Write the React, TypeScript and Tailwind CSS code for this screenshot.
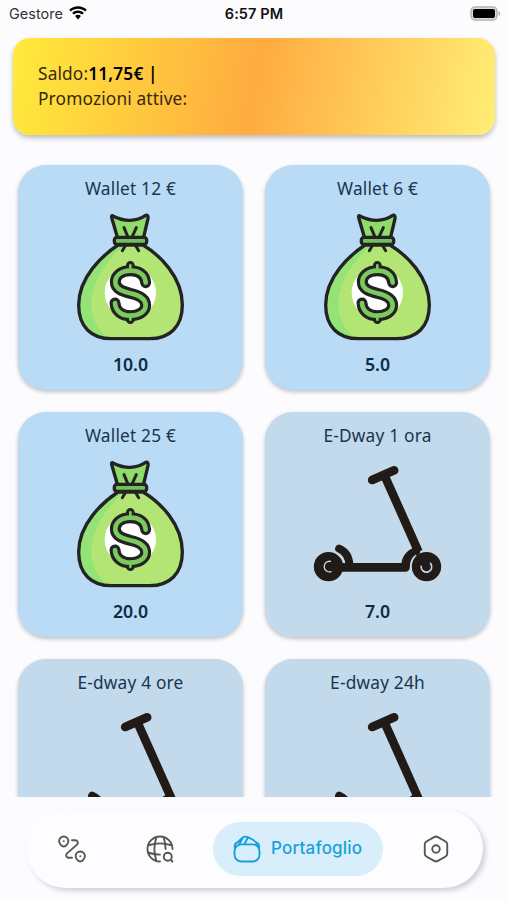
import React from 'react';

type PackKind = 'money' | 'scooter';

interface Pack {
  name: string;
  price: string;
  kind: PackKind;
}

const PACKS: Pack[] = [
  { name: 'Wallet 12 €', price: '10.0', kind: 'money' },
  { name: 'Wallet 6 €', price: '5.0', kind: 'money' },
  { name: 'Wallet 25 €', price: '20.0', kind: 'money' },
  { name: 'E-Dway 1 ora', price: '7.0', kind: 'scooter' },
  { name: 'E-dway 4 ore', price: '', kind: 'scooter' },
  { name: 'E-dway 24h', price: '', kind: 'scooter' },
];

const S_CURVE =
  'M228 233C226 207 206 197 182 197C154 197 137 212 137 231C137 252 158 259 182 265C210 271 228 281 228 301C228 321 206 332 182 332C156 332 137 318 136 294';
const S_TIPS = 'M182 199V181M182 330V344';

const MoneyBag: React.FC = () => (
  <svg viewBox="-8 24 384 384" className="w-32 h-32" fill="none" strokeLinecap="round" strokeLinejoin="round">
    <path d="M128 32Q155 46 181 46Q207 45 228 31Q237 29 235 41L221 100H144L127 41Q124 31 128 32Z" fill="#8fdc6b" stroke="#232323" strokeWidth="10" />
    <path d="M145 120C100 150 27 215 27 300C27 365 65 401 125 401H240C300 401 338 365 338 300C338 215 270 150 220 120Z" fill="#b3e575" />
    <path d="M145 120C100 150 27 215 27 300C27 365 65 401 125 401C85 385 63 335 65 292C67 225 115 165 160 122Z" fill="#93e377" />
    <circle cx="182" cy="263" r="77" fill="#fff" />
    <path d="M145 120C100 150 27 215 27 300C27 365 65 401 125 401H240C300 401 338 365 338 300C338 215 270 150 220 120Z" stroke="#232323" strokeWidth="10" />
    <path d="M163 68L174 94M200 68L188 94M166 124L158 137M199 124L207 137" stroke="#232323" strokeWidth="9" />
    <rect x="134" y="97" width="97" height="21" rx="8" fill="#72c05b" stroke="#232323" strokeWidth="10" />
    <path d={S_CURVE} stroke="#232323" strokeWidth="33" />
    <path d={S_TIPS} stroke="#232323" strokeWidth="26" />
    <path d="M162 192L172 180H192L202 192ZM162 336L172 347H192L202 336Z" fill="#232323" />
    <path d={S_CURVE} stroke="#7cc95d" strokeWidth="14" />
    <path d={S_TIPS} stroke="#7cc95d" strokeWidth="8" />
  </svg>
);

const Scooter: React.FC = () => (
  <svg viewBox="26.5 15 384 384" className="w-32 h-32 overflow-visible" fill="none" stroke="#211a17" strokeLinecap="round" strokeLinejoin="round">
    <path d="M201 75L267 46" strokeWidth="26" />
    <path d="M241 68L340 290" strokeWidth="26" strokeLinecap="butt" />
    <path d="M102 281C121 289 132 308 133 332" strokeWidth="24" />
    <path d="M70 337H301C300 312 314 296 332 290" strokeWidth="26" />
    <circle cx="70" cy="335" r="44" fill="#211a17" stroke="none" />
    <circle cx="364" cy="335" r="44" fill="#211a17" stroke="none" />
    <path d="M76 319A16 16 0 1 0 78 350" stroke="#c3daec" strokeWidth="4" />
    <path d="M100 300Q115 311 118 323M318 324Q320 310 332 301" stroke="#c3daec" strokeWidth="4" />
    <path d="M376 325A16 16 0 1 1 348 334" stroke="#c3daec" strokeWidth="5" />
  </svg>
);

const PackCard: React.FC<{ pack: Pack }> = ({ pack }) => (
  <div
    className={`h-[225px] rounded-[28px] flex flex-col items-center shadow-[0_2px_4px_rgba(0,0,0,0.24)] text-[#17364f] ${
      pack.kind === 'money' ? 'bg-[#badbf5]' : 'bg-[#c3daec]'
    }`}
  >
    <p className="mt-3 h-6 leading-6 text-[17.3px] tracking-[0.2px]">{pack.name}</p>
    <div className="mt-3">{pack.kind === 'money' ? <MoneyBag /> : <Scooter />}</div>
    <p className="mt-[11px] leading-6 text-[17.7px] font-semibold text-[#0c2c47]">{pack.price}</p>
  </div>
);

const NavIcon: React.FC<{ children: React.ReactNode }> = ({ children }) => (
  <svg
    viewBox="0 0 24 24"
    className="w-[30px] h-[30px] flex-shrink-0"
    fill="none"
    stroke="currentColor"
    strokeWidth="1.5"
    strokeLinecap="round"
    strokeLinejoin="round"
  >
    {children}
  </svg>
);

const App: React.FC = () => {
  return (
    <div className="w-[507px] h-[900px] overflow-hidden flex flex-col bg-[#fcfcff] font-['Noto_Sans',sans-serif]">
      {/* Status bar */}
      <div className="h-7 grid grid-cols-3 items-center pl-[9px] pr-[8px] font-['Inter',sans-serif] text-[#111]">
        <div className="flex items-center gap-1.5 text-[14.5px] text-[#333]">
          Gestore
          <svg viewBox="0 0 18 14" className="w-[18px] h-[14px] -mt-0.5" fill="#000">
            <path d="M9 0.3C5.6 0.3 2.5 1.6 0.2 3.8L1.9 5.6C3.8 3.8 6.2 2.8 9 2.8S14.2 3.8 16.1 5.6L17.8 3.8C15.5 1.6 12.4 0.3 9 0.3Z" />
            <path d="M9 4.6C6.8 4.6 4.8 5.4 3.2 6.9L4.9 8.6C6 7.6 7.4 7 9 7S12 7.6 13.1 8.6L14.8 6.9C13.2 5.4 11.2 4.6 9 4.6Z" />
            <path d="M9 8.7C7.9 8.7 6.9 9.1 6.1 9.9L9 13.4L11.9 9.9C11.1 9.1 10.1 8.7 9 8.7Z" />
          </svg>
        </div>
        <div className="text-center text-[14.5px] font-semibold tracking-[0.1px]">6:57 PM</div>
        <svg viewBox="0 0 31 15" className="w-[31px] h-[15px] justify-self-end -mt-0.5 translate-x-[2px]">
          <rect x="1" y="1" width="26" height="13" rx="4" fill="#dcdcdf" stroke="#b3b3b6" strokeWidth="1.5" />
          <rect x="3" y="3" width="22" height="9" rx="2" fill="#000" />
          <path d="M28.6 5C30.6 5.8 30.6 9.2 28.6 10Z" fill="#a9a9ad" />
        </svg>
      </div>

      {/* Balance */}
      <div className="mt-[10px] ml-[13px] mr-3 h-[97px] flex-shrink-0 rounded-[17px] pl-[25px] flex flex-col justify-center text-[17.3px] leading-[24.5px] tracking-[0.15px] text-[#38280c] bg-[linear-gradient(100deg,#ffeb3b_0%,#ffab40_50%,#ffee75_100%)] shadow-[0_3px_5px_rgba(0,0,0,0.25)]">
        <p>
          Saldo:<span className="font-semibold text-black">11,75€ |</span>
        </p>
        <p>Promozioni attive:</p>
      </div>

      {/* Packs */}
      <div className="flex-1 overflow-hidden pt-[30px] pl-[18px] pr-[17px] grid grid-cols-2 gap-x-[22px] gap-y-[22px] content-start">
        {PACKS.map((pack) => (
          <PackCard key={pack.name} pack={pack} />
        ))}
      </div>

      {/* Bottom navigation */}
      <div className="h-[103px] flex-shrink-0 pt-3 pl-[26px] pr-6">
        <nav className="h-[79px] rounded-full bg-[#fdfdff] flex items-center pl-[31px] pr-8 pt-px text-[#555] shadow-[3px_3px_5px_rgba(0,0,0,0.17)]">
          <NavIcon>
            <path d="M12 5h2.68c1.85 0 2.71 2.29 1.32 3.51L8.01 15.5C6.62 16.71 7.48 19 9.32 19H12" />
            <path d="M5.4 2C3.3 2 1.7 3.6 1.7 5.6C1.7 8 4 10 5.4 10C6.8 10 9.1 8 9.1 5.6C9.1 3.6 7.5 2 5.4 2Z" />
            <path d="M18.6 14C16.5 14 14.9 15.6 14.9 17.6C14.9 20 17.2 22 18.6 22C20 22 22.3 20 22.3 17.6C22.3 15.6 20.7 14 18.6 14Z" />
            <path d="M5.4 5.7h.01M18.6 17.7h.01" />
          </NavIcon>
          <div className="ml-[58px]">
            <NavIcon>
              <path d="M22 12c0-5.52-4.48-10-10-10S2 6.48 2 12s4.48 10 10 10" />
              <path d="M8 3h1a28.424 28.424 0 0 0 0 18H8M15 3c.97 2.92 1.46 5.96 1.46 9" />
              <path d="M3 16v-1c2.92.97 5.96 1.46 9 1.46M3 9a28.424 28.424 0 0 1 18 0" />
              <circle cx="18.2" cy="18.2" r="3.2" />
              <path d="m22 22-1-1" />
            </NavIcon>
          </div>
          <div className="ml-[38px] w-[170px] h-[54px] rounded-full bg-[#d8eefb] text-[#18a0dc] flex items-center pl-[19px] gap-[9px]">
            <NavIcon>
              <rect x="2" y="8.3" width="20" height="13.7" rx="5.5" />
              <path d="M2.3 11.5C1.8 9 2.8 7.2 4.6 6.6L8.4 2.9C9.6 1.8 10.8 1.8 12.6 2.5L17.4 5C19 5.9 19.7 7 19.9 8.6M21.7 11.5C22 9.2 21.2 7.6 19.4 6.7M8.9 2.5L6 8M12.8 2.6L10 8" />
            </NavIcon>
            <span className="font-['Inter',sans-serif] text-[17px] font-medium tracking-[0.2px]">Portafoglio</span>
          </div>
          <div className="ml-auto">
            <NavIcon>
              <path d="M3 9.11v5.77C3 17 3 17 5 18.35l5.5 3.18c.83.48 2.18.48 3 0l5.5-3.18c2-1.35 2-1.35 2-3.46V9.11C21 7 21 7 19 5.65l-5.5-3.18c-.82-.48-2.17-.48-3 0L5 5.65C3 7 3 7 3 9.11Z" />
              <circle cx="12" cy="12" r="3" />
            </NavIcon>
          </div>
        </nav>
      </div>
    </div>
  );
};

export default App;
